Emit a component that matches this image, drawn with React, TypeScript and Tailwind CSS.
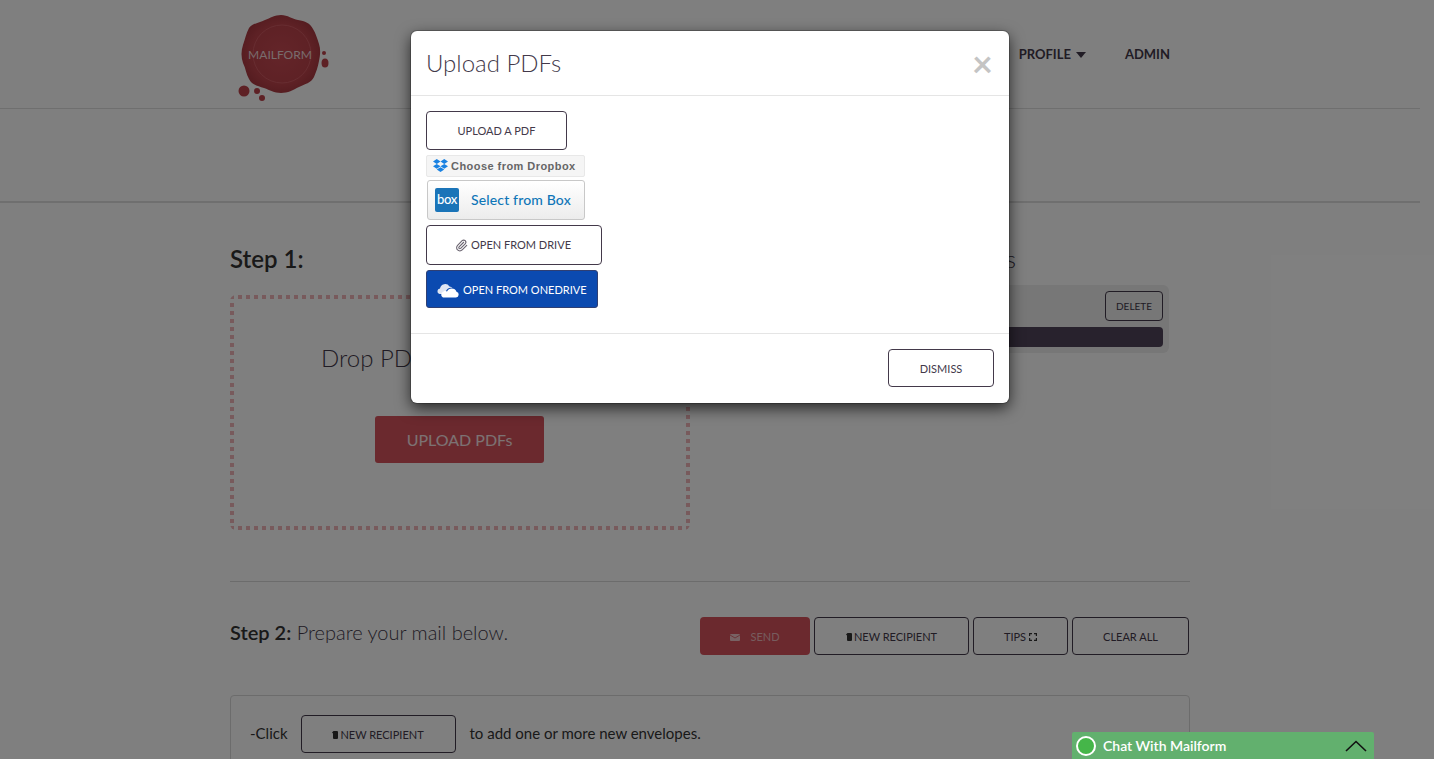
import { Paperclip } from "lucide-react";

const lato = "font-['Lato','Noto_Sans',sans-serif]";

function Logo() {
  return (
    <svg width="100" height="94" viewBox="0 0 100 94" className="block">
      <defs>
        <radialGradient id="wax" cx="50%" cy="50%" r="55%">
          <stop offset="0%" stopColor="#c84a53" />
          <stop offset="70%" stopColor="#bd434b" />
          <stop offset="100%" stopColor="#a5363e" />
        </radialGradient>
      </defs>
      <path
        d="M43 1 C50 1 54 5 60 6 C67 7 72 9 75 15 C78 20 79 24 81 30 C83 36 82 42 81 47 C80 53 78 58 76 63 C73 69 67 70 61 73 C55 76 50 79 43 79 C36 79 32 76 26 74 C20 72 14 71 11 65 C8 60 8 55 5 49 C3 43 3 37 5 31 C7 25 8 20 11 14 C15 9 21 9 27 6 C32 4 37 1 43 1 Z"
        fill="url(#wax)"
      />
      <circle cx="44" cy="40" r="29" fill="none" stroke="#cf5a62" strokeWidth="1" />
      <circle cx="6" cy="77" r="5.5" fill="#bd434b" />
      <circle cx="19" cy="77" r="3" fill="#bd434b" />
      <circle cx="24" cy="84" r="3" fill="#bd434b" />
      <circle cx="86" cy="39" r="2" fill="#bd434b" />
      <ellipse cx="87" cy="49" rx="3.5" ry="4.5" fill="#bd434b" />
      <text x="42" y="45" textAnchor="middle" fontFamily="Lato" fontSize="12" fill="#f0d8da">
        MAILFORM
      </text>
    </svg>
  );
}

function NoteIcon() {
  return (
    <svg width="6" height="8" viewBox="0 0 6 8" className="mr-[2px]">
      <path d="M1.5 0 H5 Q6 0 6 1 V7 Q6 8 5 8 H2 Q1 8 1 7 V2.5 L0 1.5 Z" fill="#333" />
    </svg>
  );
}

function TipsIcon() {
  return (
    <svg width="8" height="8" viewBox="0 0 8 8" fill="none" stroke="#333" strokeWidth="1.2">
      <path d="M0.6 3 V0.6 H3 M5 0.6 H7.4 V3 M7.4 5 V7.4 H5 M3 7.4 H0.6 V5" />
    </svg>
  );
}

function OutlineButton({ className, children }: { className: string; children: React.ReactNode }) {
  return (
    <button
      className={`flex items-center justify-center rounded-[4px] border border-[#43394a] bg-white pt-[2px] text-[11px] text-[#43394a] ${className}`}
    >
      {children}
    </button>
  );
}

function Page() {
  return (
    <div className="h-[759px] overflow-hidden bg-white pr-[14px] text-[#3a3a3a]">
      {/* Top nav */}
      <header className="h-[109px] border-b border-[#dedede]">
        <div className="mx-auto flex h-full w-[960px] items-start justify-between">
          <div className="ml-[8px] mt-[14px]">
            <Logo />
          </div>
          <nav className="mr-[20px] mt-[46px] flex items-center gap-[39px] text-[13px] font-bold leading-[17px] text-[#43394a]">
            <span className="flex items-center gap-[5px]">
              PROFILE
              <span className="h-0 w-0 border-x-[5px] border-t-[6px] border-x-transparent border-t-[#43394a]" />
            </span>
            <span>ADMIN</span>
          </nav>
        </div>
      </header>

      {/* Sub header strip */}
      <div className="h-[94px] border-b-2 border-[#dedede]" />

      <main className="mx-auto w-[960px]">
        {/* Step 1 */}
        <section className="flex h-[379px] justify-between border-b border-[#d8d8d8]">
          <div className="w-[460px]">
            <h2 className="mt-[41px] text-[24px] font-semibold leading-[29px] text-[#333]">Step 1:</h2>
            <div className="mt-[22px] flex h-[235px] w-[460px] flex-col items-start rounded-[6px] pt-[48px] [background-image:linear-gradient(to_right,#f0b5b9_50%,transparent_50%),linear-gradient(to_right,#f0b5b9_50%,transparent_50%),linear-gradient(to_bottom,#f0b5b9_50%,transparent_50%),linear-gradient(to_bottom,#f0b5b9_50%,transparent_50%)] [background-position:0_0,0_100%,0_0,100%_0] [background-repeat:repeat-x,repeat-x,repeat-y,repeat-y] [background-size:8px_4px,8px_4px,4px_8px,4px_8px]">
              <p className="ml-[91px] whitespace-nowrap text-[24px] font-light leading-[29px] text-[#43394a]">
                Drop PDFs here to upload
              </p>
              <button className="ml-[145px] mt-[44px] h-[47px] w-[169px] rounded-[3px] bg-[#d6525c] text-[16px] text-white/85">
                UPLOAD PDFs
              </button>
            </div>
          </div>

          <div className="mr-[21px] w-[440px]">
            <h2 className="mt-[41px] text-right text-[24px] font-light leading-[29px] text-[#43394a]">
              <span className="mr-[153px]">Files</span>
            </h2>
            <div className="mt-[12px] rounded-[6px] bg-[#eeeeee] p-[6px]">
              <div className="flex justify-end">
                <button className="h-[30px] w-[58px] rounded-[4px] border border-[#43394a] text-[10px] text-[#43394a]">
                  DELETE
                </button>
              </div>
              <div className="mt-[6px] h-[20px] rounded-[4px] bg-[#50455a]" />
            </div>
          </div>
        </section>

        {/* Step 2 */}
        <section className="flex h-[113px] items-start justify-between pt-[35px]">
          <h2 className="mt-px text-[20px] font-light leading-[29px] text-[#43394a]">
            <span className="font-semibold text-[#333]">Step 2:</span> Prepare your mail below.
          </h2>
          <div className="flex h-[38px] gap-[4px] pr-px">
            <button className="flex w-[110px] items-center justify-center gap-[10px] rounded-[4px] bg-[#d6525c] pt-[2px] text-[11px] text-white/60">
              <svg width="10" height="7" viewBox="0 0 10 7">
                <rect width="10" height="7" rx="1" fill="#ffffffaa" />
                <path d="M0 1 L5 4 L10 1" fill="none" stroke="#d6525c" strokeWidth="0.8" />
              </svg>
              SEND
            </button>
            <OutlineButton className="w-[155px]">
              <NoteIcon />
              NEW RECIPIENT
            </OutlineButton>
            <OutlineButton className="w-[95px] gap-[3px]">
              TIPS
              <TipsIcon />
            </OutlineButton>
            <OutlineButton className="w-[117px]">CLEAR ALL</OutlineButton>
          </div>
        </section>

        {/* Instructions */}
        <section className="h-[200px] rounded-[4px] border border-[#d8d8d8] px-[19px] pt-[19px]">
          <div className="flex items-center text-[15px] text-[#333]">
            <span className="pb-[2px]">-Click</span>
            <OutlineButton className="ml-[13px] h-[38px] w-[155px]">
              <NoteIcon />
              NEW RECIPIENT
            </OutlineButton>
            <span className="ml-[14px] pb-[2px]">to add one or more new envelopes.</span>
          </div>
        </section>
      </main>
    </div>
  );
}

function Modal() {
  return (
    <div className="absolute left-[411px] top-[31px] flex h-[372px] w-[598px] flex-col rounded-[6px] bg-white shadow-[0_0_0_1px_rgba(0,0,0,0.2),0_5px_15px_rgba(0,0,0,0.7)]">
      <div className="flex h-[65px] items-center justify-between border-b border-[#e5e5e5] pb-[2px] pl-[15px] pr-[16px]">
        <h3 className="text-[24px] font-light leading-[29px] text-[#43394a]">Upload PDFs</h3>
        <span className="mt-[2px] text-[36px] font-bold leading-none text-[#c4c4c4]">×</span>
      </div>

      <div className="flex flex-1 flex-col items-start border-b border-[#e5e5e5] pl-[15px] pt-[15px]">
        <OutlineButton className="h-[39px] w-[141px]">UPLOAD A PDF</OutlineButton>

        <button className="mt-[5px] flex h-[22px] w-[159px] items-center gap-[3px] rounded-[2px] border border-[#e8e8e8] bg-[#f5f5f5] pl-[6px] font-['Liberation_Sans',sans-serif] text-[11px] font-bold tracking-[0.45px] text-[#666]">
          <svg width="15" height="14" viewBox="0 0 15 14" fill="#1a82e2">
            <path d="M3.75 0 L7.5 2.4 L3.75 4.9 L0 2.4 Z M11.25 0 L15 2.4 L11.25 4.9 L7.5 2.4 Z M3.75 4.9 L7.5 7.3 L3.75 9.8 L0 7.3 Z M11.25 4.9 L15 7.3 L11.25 9.8 L7.5 7.3 Z M3.75 10.6 L7.5 8.2 L11.25 10.6 L7.5 13 Z" />
          </svg>
          Choose from Dropbox
        </button>

        <button className="ml-px mt-[3px] flex h-[40px] w-[158px] items-center gap-[12px] rounded-[3px] border border-[#c8c8c8] bg-gradient-to-b from-white to-[#ececec] pl-[7px] text-[14px] font-medium tracking-[0.15px] text-[#0f76b8]">
          <span className="flex h-[24px] w-[24px] items-center justify-center rounded-[2px] bg-[#1a74b8] text-[13px] tracking-tight text-white">
            box
          </span>
          <span className="pb-[2px]">Select from Box</span>
        </button>

        <OutlineButton className="mt-[5px] h-[40px] w-[176px] gap-[3px] pr-[2px] !pt-0">
          <Paperclip size={13} strokeWidth={2} color="#6a6470" />
          OPEN FROM DRIVE
        </OutlineButton>

        <button className="mt-[5px] flex h-[38px] w-[172px] items-center gap-[4px] rounded-[3px] border border-[#2f3f73] bg-[#0b4ab0] pl-[10px] pt-[2px] text-[11px] text-white">
          <svg width="22" height="15" viewBox="0 0 22 15" fill="#fff">
            <path d="M2.5 11 A2.8 2.8 0 0 1 3 5.5 A5.2 5.2 0 0 1 12.5 3.5 A4 4 0 0 1 15.5 5 A6 6 0 0 0 9 8 A4 4 0 0 0 5 11 Z" fill="#dfe6f3" />
            <path d="M6 14.5 H19 A2.9 2.9 0 0 0 19.5 8.8 A5.2 5.2 0 0 0 10 8.5 A3.3 3.3 0 0 0 6 14.5 Z" />
          </svg>
          <span>OPEN FROM ONEDRIVE</span>
        </button>
      </div>

      <div className="flex h-[69px] items-center justify-end pb-[2px] pr-[15px]">
        <OutlineButton className="h-[38px] w-[106px] !pt-[4px]">DISMISS</OutlineButton>
      </div>
    </div>
  );
}

export default function App() {
  return (
    <div className={`relative h-[759px] overflow-hidden ${lato}`}>
      <Page />
      <div className="absolute inset-0 bg-black/50" />
      <Modal />

      {/* Chat widget */}
      <div className="absolute bottom-0 left-[1072px] flex h-[27px] w-[302px] items-center rounded-t-[2px] bg-[#62b06e] pl-[4px] pr-[7px] text-[14px] font-semibold text-white">
        <span className="h-[20px] w-[20px] rounded-full border-2 border-white bg-[#45b649]" />
        <span className="ml-[7px] flex-1">Chat With Mailform</span>
        <svg width="22" height="12" viewBox="0 0 22 12" fill="none" stroke="#111" strokeWidth="1.6">
          <path d="M1 11 L11 1.5 L21 11" />
        </svg>
      </div>
    </div>
  );
}
